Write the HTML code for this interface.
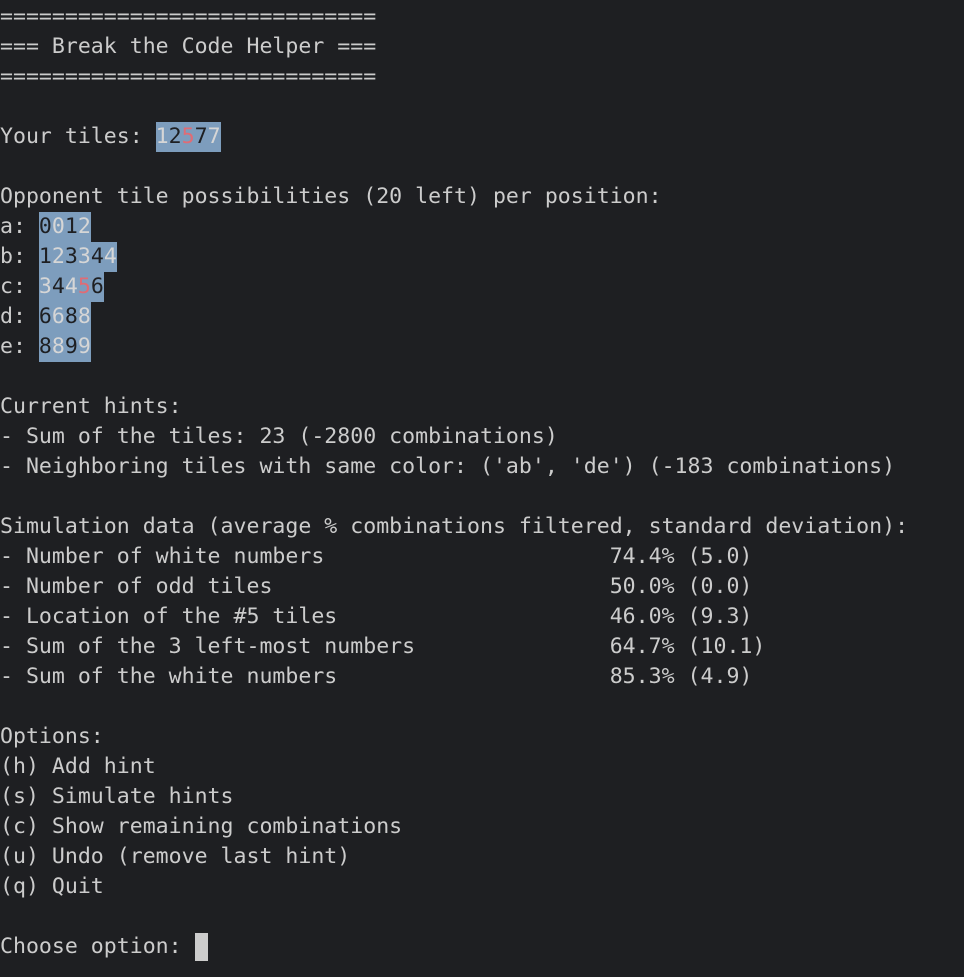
<!DOCTYPE html>
<html><head><meta charset="utf-8"><style>
html,body{margin:0;padding:0;background:#1e1f22;width:964px;height:977px;overflow:hidden}
pre{margin:0;padding:2px 0 0 0;font-family:"DejaVu Sans Mono","Liberation Mono",monospace;font-size:21.55px;line-height:30px;color:#cccccc;white-space:pre}
.t{background:#7d9dbd;display:inline-block;height:30px;vertical-align:top}
.d{color:#1e1f22}.l{color:#d6d6d6}.r{color:#e06c75}
.cur{display:inline-block;width:13px;height:28px;background:#cccccc;vertical-align:top;margin-top:1px}
</style></head><body><pre>=============================
=== Break the Code Helper ===
=============================

Your tiles: <span class="t"><span class="l">1</span><span class="d">2</span><span class="r">5</span><span class="d">7</span><span class="l">7</span></span>

Opponent tile possibilities (20 left) per position:
a: <span class="t"><span class="d">0</span><span class="l">0</span><span class="d">1</span><span class="l">2</span></span>
b: <span class="t"><span class="d">1</span><span class="l">2</span><span class="d">3</span><span class="l">3</span><span class="d">4</span><span class="l">4</span></span>
c: <span class="t"><span class="l">3</span><span class="d">4</span><span class="l">4</span><span class="r">5</span><span class="d">6</span></span>
d: <span class="t"><span class="d">6</span><span class="l">6</span><span class="d">8</span><span class="l">8</span></span>
e: <span class="t"><span class="d">8</span><span class="l">8</span><span class="d">9</span><span class="l">9</span></span>

Current hints:
- Sum of the tiles: 23 (-2800 combinations)
- Neighboring tiles with same color: ('ab', 'de') (-183 combinations)

Simulation data (average % combinations filtered, standard deviation):
- Number of white numbers                      74.4% (5.0)
- Number of odd tiles                          50.0% (0.0)
- Location of the #5 tiles                     46.0% (9.3)
- Sum of the 3 left-most numbers               64.7% (10.1)
- Sum of the white numbers                     85.3% (4.9)

Options:
(h) Add hint
(s) Simulate hints
(c) Show remaining combinations
(u) Undo (remove last hint)
(q) Quit

Choose option: <span class="cur"></span></pre></body></html>
